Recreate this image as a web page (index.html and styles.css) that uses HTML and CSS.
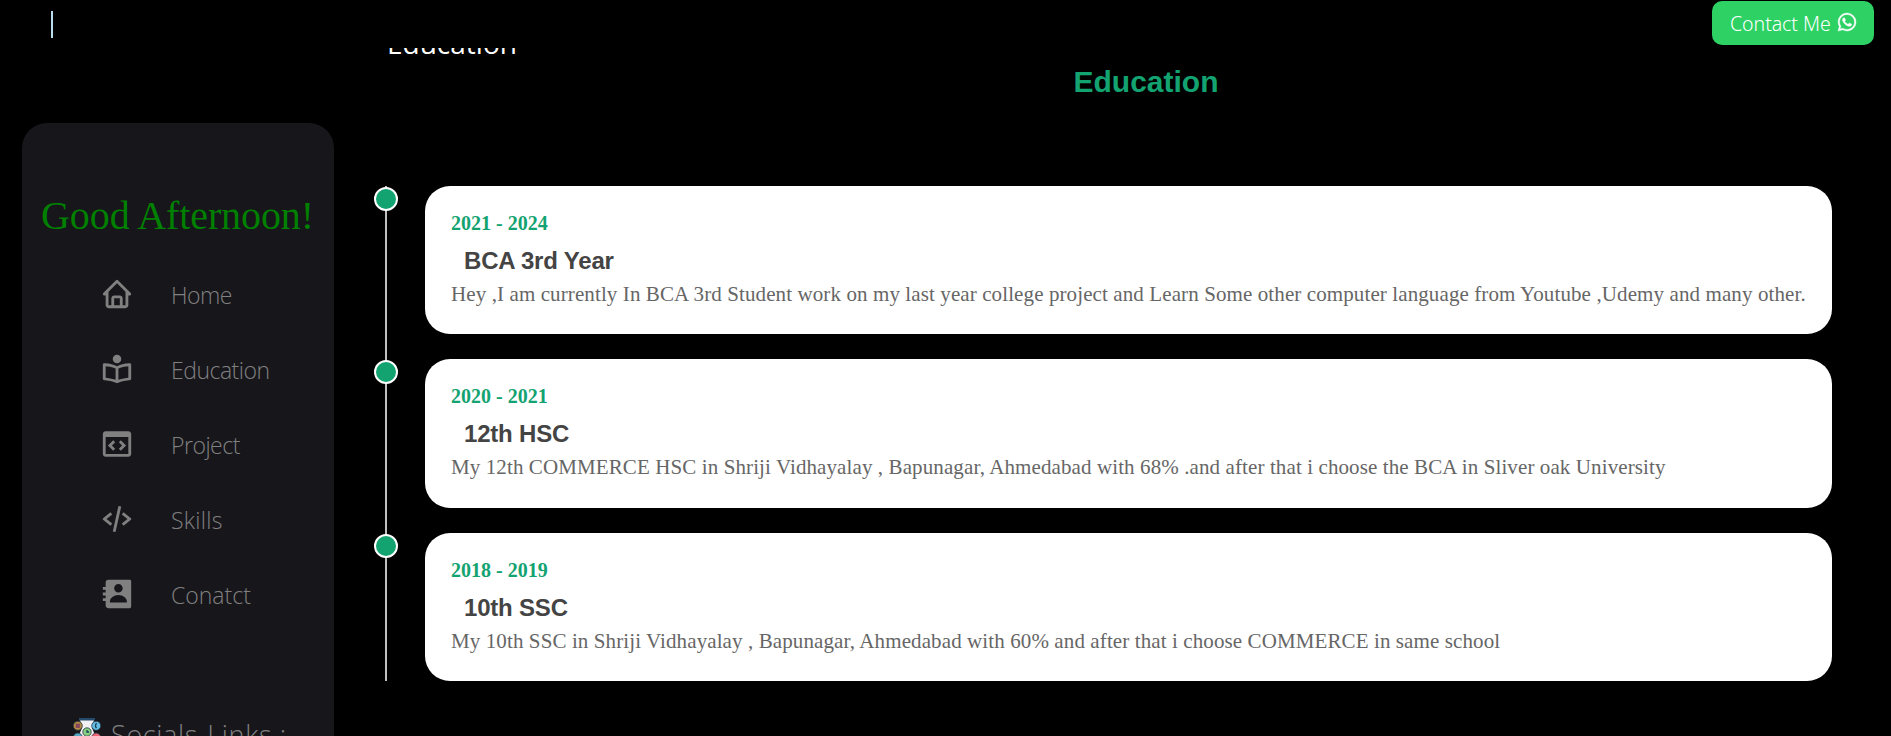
FILE: index.html
```html
<!DOCTYPE html>
<html lang="en">
<head>
<meta charset="utf-8">
<title>Portfolio - Education</title>
<link rel="stylesheet" href="styles.css">
</head>
<body>
<header class="topbar">
  <span class="typed-cursor"></span>
  <a class="contact-btn"><span>Contact Me</span>
    <svg class="wa" viewBox="0 0 24 24"><path fill-rule="evenodd" d="M18.403 5.633A8.919 8.919 0 0 0 12.053 3c-4.948 0-8.976 4.027-8.978 8.977 0 1.582.413 3.126 1.198 4.488L3 21.116l4.759-1.249a8.981 8.981 0 0 0 4.29 1.093h.004c4.947 0 8.975-4.027 8.977-8.977a8.926 8.926 0 0 0-2.627-6.35m-6.35 13.812h-.003a7.446 7.446 0 0 1-3.798-1.041l-.272-.162-2.824.741.753-2.753-.177-.282a7.448 7.448 0 0 1-1.141-3.971c.002-4.114 3.349-7.461 7.465-7.461a7.413 7.413 0 0 1 5.275 2.188 7.42 7.42 0 0 1 2.183 5.279c-.002 4.114-3.349 7.462-7.461 7.462m4.093-5.589c-.225-.113-1.327-.655-1.533-.73-.205-.075-.354-.112-.504.112s-.58.729-.711.879-.262.168-.486.056-.947-.349-1.804-1.113c-.667-.595-1.117-1.329-1.248-1.554s-.014-.346.099-.458c.101-.1.224-.262.336-.393.112-.131.149-.224.224-.374s.038-.281-.019-.393c-.056-.113-.505-1.217-.692-1.666-.181-.435-.366-.377-.504-.383a9.65 9.65 0 0 0-.429-.008.826.826 0 0 0-.599.28c-.206.225-.785.767-.785 1.871s.804 2.171.916 2.321c.112.15 1.582 2.415 3.832 3.387.536.231.954.369 1.279.473.537.171 1.026.146 1.413.089.431-.064 1.327-.542 1.514-1.066.187-.524.187-.973.131-1.067-.056-.094-.207-.151-.43-.263"/></svg>
  </a>
</header>
<div class="layout">
  <aside class="sidebar">
    <p class="greeting">Good Afternoon!</p>
    <nav class="nav">
      <a class="nav-item tight"><svg viewBox="0 0 24 24"><path d="M3 13h1v7c0 1.103.897 2 2 2h12c1.103 0 2-.897 2-2v-7h1a1 1 0 0 0 .707-1.707l-9-9a.999.999 0 0 0-1.414 0l-9 9A1 1 0 0 0 3 13zm7 7v-5h4v5h-4zm2-15.586 6 6V15l.001 5H16v-5c0-1.103-.897-2-2-2h-4c-1.103 0-2 .897-2 2v5H6v-9.586l6-6z"/></svg><span>Home</span></a>
      <a class="nav-item tight"><svg viewBox="0 0 24 24"><circle cx="12" cy="5" r="3"/><path fill-rule="evenodd" d="M21 8c-.202 0-4.85.029-9 2.008C7.85 8.029 3.202 8 3 8a1 1 0 0 0-1 1v9.883c0 .552.445.998.997 1 .02 0 4.9.05 8.575 1.98.271.15.585.15.856 0 3.675-1.93 8.555-1.98 8.575-1.98a1 1 0 0 0 .997-1V9a1 1 0 0 0-1-1zM4 10.04c1.4.08 4.4.4 7 1.61v8c-2.6-1-5.4-1.4-7-1.55zM20 18.1c-1.6.15-4.4.55-7 1.55v-8c2.6-1.2 5.6-1.53 7-1.61z"/></svg><span>Education</span></a>
      <a class="nav-item tight"><svg viewBox="0 0 24 24"><path d="M20 3H4c-1.103 0-2 .897-2 2v14c0 1.103.897 2 2 2h16c1.103 0 2-.897 2-2V5c0-1.103-.897-2-2-2zM4 19V7h16l.001 12H4z"/><path d="M9.293 9.293 5.586 13l3.707 3.707 1.414-1.414L8.414 13l2.293-2.293zm5.414 0-1.414 1.414L15.586 13l-2.293 2.293 1.414 1.414L18.414 13z"/></svg><span>Project</span></a>
      <a class="nav-item wide"><svg viewBox="0 0 24 24"><path d="m7.375 16.781 1.25-1.562L4.601 12l4.024-3.219-1.25-1.562-5 4a1 1 0 0 0 0 1.562l5 4zm9.25-9.562-1.25 1.562L19.399 12l-4.024 3.219 1.25 1.562 5-4a1 1 0 0 0 0-1.562l-5-4zM14.976 3.216l-4 18-1.953-.434 4-18z"/></svg><span>Skills</span></a>
      <a class="nav-item"><svg viewBox="0 0 24 24"><path fill-rule="evenodd" d="M21 2H6a2 2 0 0 0-2 2v3H2v2h2v2H2v2h2v2H2v2h2v3a2 2 0 0 0 2 2h15a1 1 0 0 0 1-1V3a1 1 0 0 0-1-1zm-8 2.999c1.648 0 3 1.351 3 3A3.012 3.012 0 0 1 13 11c-1.647 0-3-1.353-3-3.001 0-1.649 1.353-3 3-3zM19 18H7v-.75c0-2.219 2.705-4.5 6-4.5s6 2.281 6 4.5V18z"/></svg><span>Conatct</span></a>
    </nav>
    <div class="socials">
      <svg viewBox="0 0 28 28"><path fill="#f2f2f4" d="M7 2h14l-2 8 3 7-3 9H9l-3-9 3-7z"/><path fill="#244a6b" d="M6 0h16v2.5H6z"/><g stroke="#26333d" stroke-width=".8"><circle cx="4.8" cy="7.8" r="4.5" fill="#b18a45"/><circle cx="23.2" cy="7.8" r="4.5" fill="#65bde5"/><circle cx="14" cy="14" r="4.2" fill="#86cf83"/><circle cx="4.8" cy="19.5" r="4.5" fill="#55a9c4"/><circle cx="23.2" cy="19.5" r="4.5" fill="#ed6576"/></g><rect x="2.7" y="5.7" width="4.2" height="4.2" fill="#87455a"/><path d="M23.5 5.2q-2 2.6 0 5M14 12v2h2" fill="none" stroke="#174254" stroke-width="1.3"/></svg>
      <span>Socials-Links :</span>
    </div>
  </aside>
  <main class="content">
    <h1 class="page-title">Education</h1>
    <h2 class="section-title">Education</h2>
    <section class="timeline">
      <article class="entry"><i class="dot"></i><div class="card"><p class="date">2021 - 2024</p><h3>BCA 3rd Year</h3><p class="desc">Hey ,I am currently In BCA 3rd Student work on my last year college project and Learn Some other computer language from Youtube ,Udemy and many other.</p></div></article>
      <article class="entry"><i class="dot"></i><div class="card"><p class="date">2020 - 2021</p><h3>12th HSC</h3><p class="desc">My 12th COMMERCE HSC in Shriji Vidhayalay , Bapunagar, Ahmedabad with 68% .and after that i choose the BCA in Sliver oak University</p></div></article>
      <article class="entry"><i class="dot"></i><div class="card"><p class="date">2018 - 2019</p><h3>10th SSC</h3><p class="desc">My 10th SSC in Shriji Vidhayalay , Bapunagar, Ahmedabad with 60% and after that i choose COMMERCE in same school</p></div></article>
    </section>
  </main>
</div>
</body>
</html>
```
FILE: styles.css
```css
* { box-sizing: border-box; margin: 0; padding: 0; }
html, body { height: 736px; overflow: hidden; }
body { background: #000; font-family: "Open Sans", sans-serif; display: flex; flex-direction: column; }
svg { display: block; flex: none; fill: currentColor; }
.topbar { height: 48px; flex: none; display: flex; justify-content: space-between; align-items: flex-start; padding: 1px 17px 0 51px; background: #000; }
.typed-cursor { width: 2px; margin-left: 0; height: 27px; margin-top: 10px; background: #b9dcec; }
.contact-btn { display: flex; align-items: center; gap: 4px; width: 162px; height: 44px; padding: 1px 0 0 18px; border-radius: 10px; background: #2dd164; color: #fff; font-family: "Noto Sans", sans-serif; font-size: 19.5px; font-weight: 350; white-space: nowrap; letter-spacing: -0.05px; }
.wa { width: 24px; height: 24px; margin-top: -3px; stroke: currentColor; stroke-width: .4px; }
.layout { flex: 1; min-height: 0; display: flex; overflow: hidden; }
.sidebar { width: 312px; height: 800px; flex: none; margin: 75px 40px 0 22px; padding-top: 70px; border-radius: 25px; background: #17161b; color: #808080; }
.greeting { color: #008000; font: 40px/46px "Liberation Serif", serif; letter-spacing: -0.1px; text-align: center; white-space: nowrap; padding-right: 1px; }
.nav { margin-top: 17px; }
.nav-item { height: 75px; display: flex; align-items: center; gap: 37px; padding-left: 78px; font-size: 23px; font-weight: 300; }
.nav-item svg { width: 34px; height: 34px; }
.nav-item span { padding-top: 2px; }
.tight span { letter-spacing: -0.5px; }
.wide span { letter-spacing: 0.3px; }
.socials { display: flex; align-items: flex-start; gap: 10px; padding-left: 51px; margin-top: 87px; font-size: 27px; line-height: 34px; font-weight: 300; letter-spacing: 0.65px; white-space: nowrap; }
.socials svg { width: 28px; height: 28px; }
.content { flex: 1; min-width: 0; margin-right: 59px; }
.page-title { height: 16px; margin: -24px 0 24px 13px; color: #fff; font-size: 28px; line-height: 38px; font-weight: 400; }
.section-title { color: #13a371; font: bold 30px/34px "Liberation Sans", sans-serif; text-align: center; padding: 1px 0 0 86px; }
.timeline { margin-top: 87px; display: flex; flex-direction: column; gap: 25px; width: 1458px; background: linear-gradient(#c0c0c0, #c0c0c0) 11px 0 / 2px 100% no-repeat; }
.entry { display: flex; align-items: flex-start; gap: 27px; height: 148.3px; }
.dot { flex: none; width: 24px; height: 24px; margin-top: 1px; border: 2px solid #fff; border-radius: 50%; background: #13a371; }
.card { flex: 1; height: 100%; padding: 26px; border-radius: 25px; background: #fff; font-family: "Liberation Serif", serif; white-space: nowrap; }
.date { color: #13a371; font-size: 20px; line-height: 23px; font-weight: bold; }
.card h3 { margin: 12px 0 0 13px; color: #444; font: bold 24px/28px "Liberation Sans", sans-serif; letter-spacing: -0.2px; }
.desc { margin-top: 7px; color: #666; font-size: 21px; line-height: 25px; letter-spacing: 0.105px; }
```
